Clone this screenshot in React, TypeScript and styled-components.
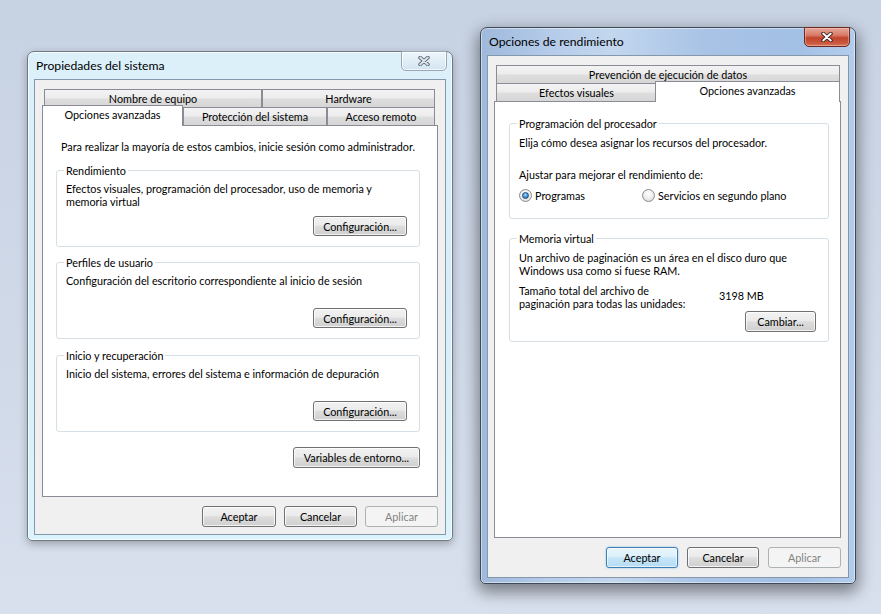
import React from "react"
import styled, { createGlobalStyle, css } from "styled-components"

const GlobalStyle = createGlobalStyle`
  body {
    margin: 0;
    font-family: Lato, "Liberation Sans", sans-serif;
  }
`

const Desktop = styled.div`
  position: relative;
  width: 881px;
  height: 614px;
  overflow: hidden;
  background: linear-gradient(180deg, #c7d2e3 0%, #d0d9e8 55%, #d8e0ee 100%);
  font-size: 10.8px;
  color: #000;
`

const Window = styled.div<{ $x: number; $y: number; $w: number; $h: number; $active?: boolean }>`
  position: absolute;
  left: ${(p) => p.$x}px;
  top: ${(p) => p.$y}px;
  width: ${(p) => p.$w}px;
  height: ${(p) => p.$h}px;
  box-sizing: border-box;
  display: flex;
  flex-direction: column;
  border-radius: 7px 7px 5px 5px;
  ${(p) =>
    p.$active
      ? css`
          border: 1px solid #3e4a58;
          background: linear-gradient(90deg, #9fb9dc 0%, #b4cbe9 18%, #c3d7ee 35%, #a8c3e6 60%, #a3c0e5 85%, #b3cdec 100%);
          box-shadow: inset 0 0 0 1px rgba(255, 255, 255, 0.45), 0 6px 16px 2px rgba(0, 0, 0, 0.45);
        `
      : css`
          border: 1px solid #6f7884;
          background: linear-gradient(180deg, #dcf0fa 0%, #d6eef9 50%, #dbf3fc 100%);
          box-shadow: inset 0 0 0 1px rgba(255, 255, 255, 0.7), 0 3px 8px rgba(0, 0, 0, 0.28);
        `}
`

const TitleBar = styled.div`
  height: 27px;
  display: flex;
  align-items: flex-start;
  padding: 0 5px 0 8px;
`

const Title = styled.div`
  flex: 1;
  line-height: 27px;
  font-size: 12.2px;
`

const CloseButton = styled.div<{ $active?: boolean }>`
  width: 46px;
  height: 20px;
  margin-top: -1px;
  box-sizing: border-box;
  border-radius: 0 0 5px 5px;
  display: flex;
  align-items: center;
  justify-content: center;
  ${(p) =>
    p.$active
      ? css`
          border: 1px solid #6b2a22;
          background: linear-gradient(180deg, #e5a89c 0%, #d97a67 40%, #c2432c 55%, #c95a41 85%, #d97b5e 100%);
          box-shadow: inset 0 0 0 1px rgba(255, 200, 190, 0.45);
        `
      : css`
          border: 1px solid #9aa7b4;
          background: linear-gradient(180deg, #eef6fb 0%, #e0edf6 50%, #d3e5f1 100%);
          box-shadow: inset 0 0 0 1px rgba(255, 255, 255, 0.7);
        `}
`

const Client = styled.div<{ $pad: string }>`
  flex: 1;
  margin: 0 6px 5px;
  border: 1px solid #8597ab;
  background: #f0f0f0;
  display: flex;
  flex-direction: column;
  padding: ${(p) => p.$pad};
`

const TabControl = styled.div`
  flex: 1;
  display: flex;
  flex-direction: column;
`

const TabRow = styled.div`
  display: flex;
  align-items: flex-end;
  height: 18px;
  padding: 0 2px;
`

const Tab = styled.div<{ $w: number; $selected?: boolean }>`
  flex: 0 0 ${(p) => p.$w}px;
  box-sizing: border-box;
  height: 18px;
  border: 1px solid #898c95;
  border-bottom: none;
  text-align: center;
  line-height: 17px;
  white-space: nowrap;
  background: linear-gradient(180deg, #f3f3f3 0%, #ececec 48%, #dedede 52%, #d6d6d6 100%);
  ${(p) =>
    p.$selected &&
    css`
      position: relative;
      z-index: 1;
      height: 21px;
      margin: -2px 0 -1px -2px;
      line-height: 18px;
      padding-bottom: 2px;
      background: #fff;
    `}
`

const Panel = styled.div<{ $pad: string }>`
  flex: 1;
  background: #fff;
  border: 1px solid #898c95;
  display: flex;
  flex-direction: column;
  padding: ${(p) => p.$pad};
`

const Text = styled.div<{ $mt?: number; $ml?: number }>`
  line-height: 13px;
  margin-top: ${(p) => p.$mt ?? 0}px;
  margin-left: ${(p) => p.$ml ?? 0}px;
  white-space: nowrap;
`

const Description = styled.div`
  line-height: 13px;
  min-height: 26px;
`

const GroupBox = styled.fieldset<{ $mt: number; $pad: string }>`
  margin: ${(p) => p.$mt}px 0 0;
  padding: ${(p) => p.$pad};
  min-width: 0;
  border: 1px solid #d5dfe5;
  border-radius: 3px;
`

const Legend = styled.legend`
  margin-left: -2px;
  padding: 0 2px;
  line-height: 13px;
`

const ButtonRow = styled.div<{ $mt?: number; $gap?: number }>`
  display: flex;
  justify-content: flex-end;
  gap: ${(p) => p.$gap ?? 8}px;
  margin-top: ${(p) => p.$mt ?? 0}px;
`

const Button = styled.div<{ $w: number; $h?: number; $variant?: "default" | "disabled" }>`
  width: ${(p) => p.$w}px;
  height: ${(p) => p.$h ?? 21}px;
  box-sizing: border-box;
  border-radius: 3px;
  display: flex;
  align-items: center;
  justify-content: center;
  border: 1px solid #707070;
  background: linear-gradient(180deg, #f2f2f2 0%, #ebebeb 45%, #dddddd 52%, #cfcfcf 100%);
  box-shadow: inset 0 0 0 1px rgba(255, 255, 255, 0.75);
  ${(p) =>
    p.$variant === "default" &&
    css`
      border-color: #3c7fb1;
      background: linear-gradient(180deg, #eaf5fc 0%, #dcf0fb 45%, #c6e6f8 52%, #b6dbf2 100%);
      box-shadow: inset 0 0 0 1px rgba(255, 255, 255, 0.6), 0 0 2px rgba(60, 160, 230, 0.6);
    `}
  ${(p) =>
    p.$variant === "disabled" &&
    css`
      border-color: #adb2b5;
      background: #f4f4f4;
      color: #838383;
      box-shadow: none;
    `}
`

const RadioRow = styled.div`
  display: grid;
  grid-template-columns: 123px auto;
  margin-top: 8px;
`

const RadioOption = styled.label`
  display: flex;
  align-items: center;
  gap: 3px;
  line-height: 13px;
`

const RadioCircle = styled.span<{ $on?: boolean }>`
  width: 13px;
  height: 13px;
  box-sizing: border-box;
  border-radius: 50%;
  border: 1px solid #8b8b8b;
  background: radial-gradient(circle at 50% 35%, #ffffff 0%, #ececec 55%, #d2d2d2 100%);
  display: flex;
  align-items: center;
  justify-content: center;
  &::after {
    content: "";
    display: ${(p) => (p.$on ? "block" : "none")};
    width: 7px;
    height: 7px;
    box-sizing: border-box;
    border-radius: 50%;
    border: 1px solid #1c4b7c;
    background: radial-gradient(circle at 45% 35%, #b6e0fb 0%, #4b9ae0 45%, #1f5e9e 100%);
  }
`

const SizeGrid = styled.div`
  display: grid;
  grid-template-columns: 200px auto;
  margin-top: 7px;
  line-height: 13px;
`

const SizeValue = styled.div`
  margin-top: 5px;
`

const CloseGlyph = ({ active }: { active?: boolean }) => (
  <svg width="12" height="10" viewBox="0 0 12 10">
    <path d="M2.2 1.6 L9.8 8.4 M9.8 1.6 L2.2 8.4" stroke={active ? "#3d1f1b" : "#5f6a76"} strokeWidth="3.8" strokeLinecap="round" fill="none" />
    <path d="M2.2 1.6 L9.8 8.4 M9.8 1.6 L2.2 8.4" stroke={active ? "#ffffff" : "#dbe3ea"} strokeWidth="2" strokeLinecap="round" fill="none" />
  </svg>
)

const SystemProperties = () => (
  <Window $x={27} $y={51} $w={426} $h={490}>
    <TitleBar>
      <Title>Propiedades del sistema</Title>
      <CloseButton>
        <CloseGlyph />
      </CloseButton>
    </TitleBar>
    <Client $pad="9px 7px 7px">
      <TabControl>
        <TabRow>
          <Tab $w={218}>Nombre de equipo</Tab>
          <Tab $w={173}>Hardware</Tab>
        </TabRow>
        <TabRow>
          <Tab $w={141} $selected>Opciones avanzadas</Tab>
          <Tab $w={144}>Protección del sistema</Tab>
          <Tab $w={108}>Acceso remoto</Tab>
        </TabRow>
        <Panel $pad="14px 17px 0 13px">
          <Text $ml={5}>Para realizar la mayoría de estos cambios, inicie sesión como administrador.</Text>
          <GroupBox $mt={11} $pad="5px 12px 10px 9px">
            <Legend>Rendimiento</Legend>
            <Description>
              Efectos visuales, programación del procesador, uso de memoria y
              <br />
              memoria virtual
            </Description>
            <ButtonRow $mt={8}>
              <Button $w={94} $h={20}>Configuración...</Button>
            </ButtonRow>
          </GroupBox>
          <GroupBox $mt={9} $pad="5px 12px 10px 9px">
            <Legend>Perfiles de usuario</Legend>
            <Description>Configuración del escritorio correspondiente al inicio de sesión</Description>
            <ButtonRow $mt={8}>
              <Button $w={94} $h={20}>Configuración...</Button>
            </ButtonRow>
          </GroupBox>
          <GroupBox $mt={10} $pad="5px 12px 10px 9px">
            <Legend>Inicio y recuperación</Legend>
            <Description>Inicio del sistema, errores del sistema e información de depuración</Description>
            <ButtonRow $mt={8}>
              <Button $w={94} $h={20}>Configuración...</Button>
            </ButtonRow>
          </GroupBox>
          <ButtonRow $mt={15}>
            <Button $w={127} $h={21}>Variables de entorno...</Button>
          </ButtonRow>
        </Panel>
      </TabControl>
      <ButtonRow $mt={9} $gap={8}>
        <Button $w={74}>Aceptar</Button>
        <Button $w={73}>Cancelar</Button>
        <Button $w={73} $variant="disabled">Aplicar</Button>
      </ButtonRow>
    </Client>
  </Window>
)

const PerformanceOptions = () => (
  <Window $x={480} $y={27} $w={376} $h={557} $active>
    <TitleBar>
      <Title>Opciones de rendimiento</Title>
      <CloseButton $active>
        <CloseGlyph active />
      </CloseButton>
    </TitleBar>
    <Client $pad="9px 7px 9px 6px">
      <TabControl>
        <TabRow>
          <Tab $w={344}>Prevención de ejecución de datos</Tab>
        </TabRow>
        <TabRow>
          <Tab $w={161}>Efectos visuales</Tab>
          <Tab $w={185} $selected>Opciones avanzadas</Tab>
        </TabRow>
        <Panel $pad="15px 11px 0 14px">
          <GroupBox $mt={0} $pad="6px 12px 16px 9px">
            <Legend>Programación del procesador</Legend>
            <Text>Elija cómo desea asignar los recursos del procesador.</Text>
            <Text $mt={19}>Ajustar para mejorar el rendimiento de:</Text>
            <RadioRow>
              <RadioOption>
                <RadioCircle $on />
                Programas
              </RadioOption>
              <RadioOption>
                <RadioCircle />
                Servicios en segundo plano
              </RadioOption>
            </RadioRow>
          </GroupBox>
          <GroupBox $mt={13} $pad="6px 12px 9px 9px">
            <Legend>Memoria virtual</Legend>
            <Description>
              Un archivo de paginación es un área en el disco duro que
              <br />
              Windows usa como si fuese RAM.
            </Description>
            <SizeGrid>
              <div>
                Tamaño total del archivo de
                <br />
                paginación para todas las unidades:
              </div>
              <SizeValue>3198 MB</SizeValue>
            </SizeGrid>
            <ButtonRow $mt={1}>
              <Button $w={71}>Cambiar...</Button>
            </ButtonRow>
          </GroupBox>
        </Panel>
      </TabControl>
      <ButtonRow $mt={9} $gap={9}>
        <Button $w={72} $variant="default">Aceptar</Button>
        <Button $w={72}>Cancelar</Button>
        <Button $w={73} $variant="disabled">Aplicar</Button>
      </ButtonRow>
    </Client>
  </Window>
)

const App = () => (
  <Desktop>
    <GlobalStyle />
    <SystemProperties />
    <PerformanceOptions />
  </Desktop>
)

export default App
